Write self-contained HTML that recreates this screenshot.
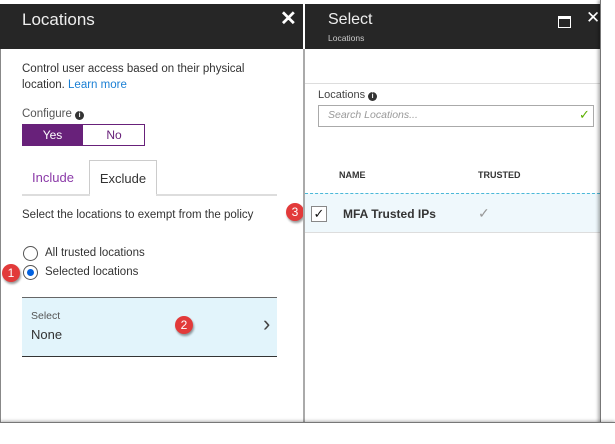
<!DOCTYPE html>
<html><head><style>
body{margin:0;width:615px;height:443px;background:#fff;position:relative;overflow:hidden;font-family:"Liberation Sans",sans-serif;color:#333}
.a{position:absolute}
.badge{position:absolute;width:18px;height:18px;border-radius:50%;background:#e23a3a;color:#fff;font-size:12px;text-align:center;line-height:18px;box-shadow:1px 2px 2px rgba(0,0,0,.4)}
</style></head><body>
<!-- left panel -->
<div class="a" style="left:0;top:4px;width:303px;height:420px;border-left:1px solid #888"></div>
<div class="a" style="left:0;top:4px;width:303px;height:45px;background:#262626"></div>
<div class="a" style="left:22px;top:10px;color:#eee;font-size:17px">Locations</div>
<div class="a" style="left:280px;top:6px;color:#fff;font-size:20px;font-weight:bold">✕</div>
<div class="a" style="left:22px;top:61px;font-size:11.5px;line-height:16px;color:#333">Control user access based on their physical<br>location. <span style="color:#1a7fd4">Learn more</span></div>
<div class="a" style="left:22px;top:108px;font-size:11.5px;color:#555">Configure <span style="display:inline-block;width:9px;height:9px;border-radius:50%;background:#333;color:#fff;font-size:7px;text-align:center;line-height:9px;font-weight:bold">i</span></div>
<div class="a" style="left:22px;top:124px;width:121px;height:20px;border:1px solid #68217a"></div>
<div class="a" style="left:22px;top:124px;width:61px;height:22px;background:#68217a;color:#fff;font-size:12px;text-align:center;line-height:22px">Yes</div>
<div class="a" style="left:83px;top:124px;width:62px;height:22px;color:#68217a;font-size:12px;text-align:center;line-height:22px">No</div>
<div class="a" style="left:32px;top:170px;color:#8b3aa8;font-size:13px">Include</div>
<div class="a" style="left:89px;top:160px;width:66px;height:35px;border:1px solid #ccc;border-bottom:none;background:#fff;font-size:13px;text-align:center;line-height:35px;color:#333">Exclude</div>
<div class="a" style="left:22px;top:194px;width:255px;height:2px;background:#ddd"></div>
<div class="a" style="left:90px;top:194px;width:66px;height:2px;background:#fff"></div>
<div class="a" style="left:22px;top:209px;font-size:11.5px;color:#333">Select the locations to exempt from the policy</div>
<div class="a" style="left:23px;top:246px;width:13px;height:13px;border:1px solid #555;border-radius:50%"></div>
<div class="a" style="left:45px;top:247px;font-size:11.5px">All trusted locations</div>
<div class="a" style="left:23px;top:265px;width:13px;height:13px;border:1px solid #555;border-radius:50%"></div>
<div class="a" style="left:27px;top:269px;width:7px;height:7px;background:#0060df;border-radius:50%"></div>
<div class="a" style="left:45px;top:266px;font-size:11.5px">Selected locations</div>
<div class="a" style="left:22px;top:297px;width:255px;height:58px;background:#e2f4fb;border-top:1px solid #666;border-bottom:1px solid #333"></div>
<div class="a" style="left:31px;top:310px;font-size:10.5px;color:#555">Select</div>
<div class="a" style="left:31px;top:327px;font-size:13px;color:#333">None</div>
<div class="a" style="left:263px;top:311px;font-size:22px;color:#444;font-weight:300">&#x203A;</div>
<div class="badge" style="left:2px;top:264px">1</div>
<div class="badge" style="left:175px;top:316px">2</div>
<div class="badge" style="left:286px;top:203px">3</div>
<!-- right panel -->
<div class="a" style="left:305px;top:4px;width:295px;height:45px;background:#262626"></div>
<div class="a" style="left:328px;top:11px;color:#eee;font-size:16px">Select</div>
<div class="a" style="left:328px;top:33px;color:#ccc;font-size:8.5px">Locations</div>
<div class="a" style="left:558px;top:16px;width:11px;height:8px;border:1.5px solid #fff;border-top-width:3px"></div>
<div class="a" style="left:586px;top:8px;color:#fff;font-size:17px">✕</div>
<div class="a" style="left:305px;top:83px;width:295px;height:1px;background:#ddd"></div>
<div class="a" style="left:318px;top:89px;font-size:11px;color:#444">Locations <span style="display:inline-block;width:9px;height:9px;border-radius:50%;background:#333;color:#fff;font-size:7px;text-align:center;line-height:9px;font-weight:bold">i</span></div>
<div class="a" style="left:318px;top:105px;width:274px;height:20px;border:1px solid #aaa"></div>
<div class="a" style="left:328px;top:109px;font-size:10.5px;font-style:italic;color:#999">Search Locations...</div>
<div class="a" style="left:579px;top:107px;font-size:13px;color:#5cb000">✓</div>
<div class="a" style="left:339px;top:170px;font-size:9px;font-weight:bold;color:#333">NAME</div>
<div class="a" style="left:478px;top:170px;font-size:9px;font-weight:bold;color:#333">TRUSTED</div>
<div class="a" style="left:305px;top:193px;width:295px;height:38px;background:#eff8fc;border-top:1px dashed #4ab8d8;border-bottom:1px solid #ddd"></div>
<div class="a" style="left:311px;top:206px;width:14px;height:14px;border:1px solid #888;background:#fff;font-size:13px;line-height:14px;text-align:center;color:#111">✓</div>
<div class="a" style="left:343px;top:207px;font-size:12px;font-weight:bold;color:#333">MFA Trusted IPs</div>
<div class="a" style="left:478px;top:205px;font-size:14px;color:#999">✓</div>
<div class="a" style="left:303px;top:49px;width:2px;height:375px;background:#aaa"></div>
<div class="a" style="left:600px;top:0;width:15px;height:443px;background:#fff;border-left:1px solid #777;box-shadow:-2px 0 3px rgba(0,0,0,.3)"></div>
<div class="a" style="left:0;top:422px;width:615px;height:21px;background:#fff;border-top:1px solid #777;box-shadow:0 -1px 3px rgba(0,0,0,.3)"></div>
</body></html>
